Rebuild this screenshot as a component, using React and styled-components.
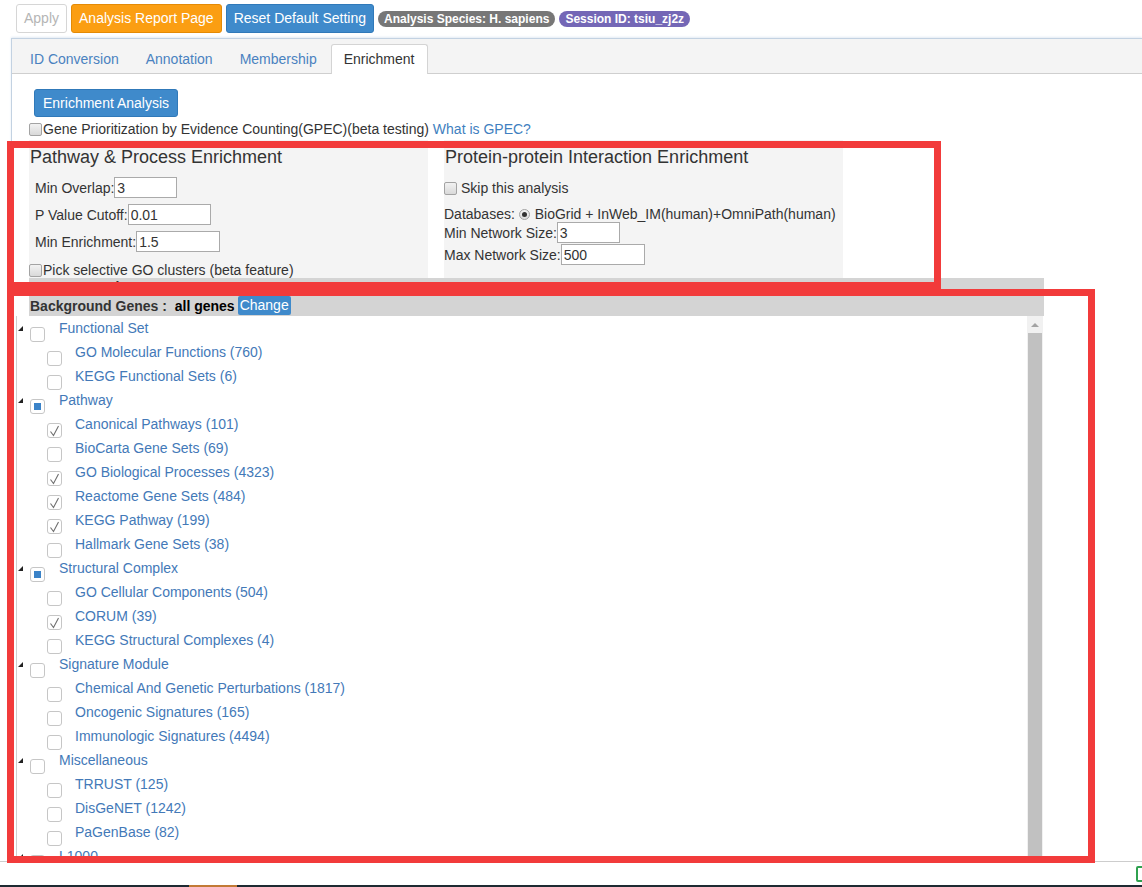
import React from "react";
import styled, { createGlobalStyle, css } from "styled-components";

const GlobalStyle = createGlobalStyle`
  html, body {
    margin: 0;
    padding: 0;
    background: #fff;
  }
  body {
    font-family: "Liberation Sans", Arial, sans-serif;
    font-size: 14px;
    color: #333;
  }
`;

const groups = [
    {
        name: "Functional Set",
        state: "none",
        items: [
            ["GO Molecular Functions (760)", false],
            ["KEGG Functional Sets (6)", false],
        ],
    },
    {
        name: "Pathway",
        state: "partial",
        items: [
            ["Canonical Pathways (101)", true],
            ["BioCarta Gene Sets (69)", false],
            ["GO Biological Processes (4323)", true],
            ["Reactome Gene Sets (484)", true],
            ["KEGG Pathway (199)", true],
            ["Hallmark Gene Sets (38)", false],
        ],
    },
    {
        name: "Structural Complex",
        state: "partial",
        items: [
            ["GO Cellular Components (504)", false],
            ["CORUM (39)", true],
            ["KEGG Structural Complexes (4)", false],
        ],
    },
    {
        name: "Signature Module",
        state: "none",
        items: [
            ["Chemical And Genetic Perturbations (1817)", false],
            ["Oncogenic Signatures (165)", false],
            ["Immunologic Signatures (4494)", false],
        ],
    },
    {
        name: "Miscellaneous",
        state: "none",
        items: [
            ["TRRUST (125)", false],
            ["DisGeNET (1242)", false],
            ["PaGenBase (82)", false],
        ],
    },
    { name: "L1000", state: "none", items: [] },
];

function TreeCheck({ state }) {
    return (
        <TreeBox>
            {state === "partial" && <PartialMark />}
            {state === "checked" && (
                <svg width="15" height="15" viewBox="0 0 15 15">
                    <polyline
                        points="3.5,8.5 6.5,12.5 11.5,3"
                        fill="none"
                        stroke="#6f6f6f"
                        strokeWidth="1.1"
                    />
                </svg>
            )}
        </TreeBox>
    );
}

export default function App() {
    return (
        <Page>
            <GlobalStyle />
            <Toolbar>
                <Btn $variant="disabled">Apply</Btn>
                <Btn $variant="warning">Analysis Report Page</Btn>
                <Btn $variant="primary">Reset Default Setting</Btn>
                <Badge $tone="#777">Analysis Species: H. sapiens</Badge>
                <Badge $tone="#7467b6">Session ID: tsiu_zj2z</Badge>
            </Toolbar>

            <Panel>
                <TabBar>
                    <Tab>ID Conversion</Tab>
                    <Tab>Annotation</Tab>
                    <Tab>Membership</Tab>
                    <Tab $active>Enrichment</Tab>
                </TabBar>
                <Body>
                    <ActionBtn>Enrichment Analysis</ActionBtn>
                    <CheckLine>
                        <NativeBox />
                        Gene Prioritization by Evidence Counting(GPEC)(beta
                        testing)&nbsp;<Link>What is GPEC?</Link>
                    </CheckLine>

                    <Wells>
                        <Well>
                            <WellTitle>Pathway &amp; Process Enrichment</WellTitle>
                            <Field $mt={10}>
                                Min Overlap:<Input $w={63} defaultValue="3" />
                            </Field>
                            <Field $mt={6}>
                                P Value Cutoff:
                                <Input $w={83} defaultValue="0.01" />
                            </Field>
                            <Field $mt={6}>
                                Min Enrichment:
                                <Input $w={84} defaultValue="1.5" />
                            </Field>
                            <PickLine>
                                <NativeBox />
                                Pick selective GO clusters (beta feature)
                            </PickLine>
                        </Well>
                        <Well>
                            <WellTitle>
                                Protein-protein Interaction Enrichment
                            </WellTitle>
                            <SkipLine>
                                <NativeBox $gap={4} />
                                Skip this analysis
                            </SkipLine>
                            <DbLine>
                                Databases:&nbsp;
                                <Radio />
                                BioGrid + InWeb_IM(human)+OmniPath(human)
                            </DbLine>
                            <NetField>
                                Min Network Size:
                                <Input $w={63} defaultValue="3" />
                            </NetField>
                            <NetField $mt={1}>
                                Max Network Size:
                                <Input $w={84} defaultValue="500" />
                            </NetField>
                        </Well>
                    </Wells>

                    <GrayBar $h={17}>Input Gene List 0</GrayBar>
                    <GrayBar $h={21}>
                        Background Genes :&nbsp;&nbsp;<Strong>all genes</Strong>
                        <ChangeBtn>Change</ChangeBtn>
                    </GrayBar>

                    <Tree>
                        <TreeList>
                            {groups.map((g) => (
                                <React.Fragment key={g.name}>
                                    <GroupRow>
                                        <Toggle />
                                        <TreeCheck state={g.state} />
                                        <GroupLabel>{g.name}</GroupLabel>
                                    </GroupRow>
                                    {g.items.map(([label, on]) => (
                                        <ItemRow key={label}>
                                            <TreeCheck
                                                state={on ? "checked" : "none"}
                                            />
                                            <ItemLabel>{label}</ItemLabel>
                                        </ItemRow>
                                    ))}
                                </React.Fragment>
                            ))}
                        </TreeList>
                        <ScrollBar>
                            <ScrollArrow />
                            <ScrollThumb />
                        </ScrollBar>
                    </Tree>
                </Body>
            </Panel>

            <Rule />
            <Bottom>
                <StatusIcon />
            </Bottom>
            <Taskbar>
                <TaskItem />
            </Taskbar>

            <Highlight $x={7} $y={141} $w={934} $h={148} />
            <Highlight $x={7} $y={289} $w={1088} $h={574} />
        </Page>
    );
}

const Page = styled.div`
    position: relative;
    width: 1142px;
    height: 887px;
    overflow: hidden;
    display: flex;
    flex-direction: column;
`;

const Toolbar = styled.div`
    display: flex;
    align-items: center;
    gap: 4px;
    padding: 4px 0 0 16px;
    height: 33px;
    box-sizing: border-box;
`;

const variants = {
    disabled: css`
        background: #fff;
        border-color: #d6d6d6;
        color: #b5b5b5;
    `,
    warning: css`
        background: #fb9e12;
        border-color: #e48a05;
        color: #fff;
    `,
    primary: css`
        background: #3f8acb;
        border-color: #3079b9;
        color: #fff;
    `,
};

const Btn = styled.button`
    font-family: "Liberation Sans", Arial, sans-serif;
    font-size: 14px;
    line-height: 17px;
    padding: 5px 7px;
    border: 1px solid;
    border-radius: 3px;
    ${(p) => variants[p.$variant]}
`;

const Badge = styled.span`
    background: ${(p) => p.$tone};
    color: #fff;
    font-weight: bold;
    font-size: 12px;
    line-height: 14px;
    padding: 1px 6px;
    border-radius: 9px;
    margin-top: 1px;
`;

const Panel = styled.div`
    margin: 5px 0 0 11px;
    border-top: 1px solid #c3d2e2;
    border-left: 1px solid #c3d2e2;
    box-shadow: 0 -1px 2px #e3ebf4;
`;

const TabBar = styled.div`
    display: flex;
    align-items: flex-end;
    gap: 1px;
    height: 35px;
    box-sizing: border-box;
    padding-left: 5px;
    background: #f4f4f4;
    border-bottom: 1px solid #cfcfcf;
`;

const Tab = styled.div`
    height: 30px;
    line-height: 29px;
    padding: 0 12px;
    margin-bottom: -1px;
    box-sizing: border-box;
    color: ${(p) => (p.$active ? "#333" : "#4a82c0")};
    background: ${(p) => (p.$active ? "#fff" : "transparent")};
    border: 1px solid ${(p) => (p.$active ? "#d4d4d4" : "transparent")};
    border-bottom: none;
    border-radius: 3px 3px 0 0;
`;

const Body = styled.div`
    padding: 15px 0 0 17px;
`;

const ActionBtn = styled.button`
    display: block;
    margin-left: 5px;
    height: 28px;
    padding: 0 8px;
    font-family: "Liberation Sans", Arial, sans-serif;
    font-size: 14px;
    color: #fff;
    background: #3f8acb;
    border: 1px solid #3079b9;
    border-radius: 3px;
`;

const CheckLine = styled.div`
    display: flex;
    align-items: center;
    margin-top: 3px;
    line-height: 18px;
`;

const Link = styled.span`
    color: #3f7fc0;
`;

const NativeBox = styled.span`
    display: inline-block;
    width: 13px;
    height: 13px;
    box-sizing: border-box;
    margin-right: ${(p) => (p.$gap == null ? 1 : p.$gap)}px;
    border: 1px solid #a3a3a3;
    border-radius: 2px;
    background: linear-gradient(#f2f2f2, #d9d9d9);
    flex: none;
`;

const Radio = styled.span`
    position: relative;
    display: inline-block;
    width: 11px;
    height: 11px;
    box-sizing: border-box;
    margin: 0 5px 0 0;
    border: 1px solid #a3a3a3;
    border-radius: 50%;
    background: linear-gradient(#f4f4f4, #dcdcdc);
    &::after {
        content: "";
        position: absolute;
        left: 2px;
        top: 2px;
        width: 5px;
        height: 5px;
        border-radius: 50%;
        background: #333;
    }
`;

const Wells = styled.div`
    display: flex;
    gap: 16px;
    margin-top: 2px;
`;

const Well = styled.div`
    width: 399px;
    height: 138px;
    background: #f4f4f4;
    display: flex;
    flex-direction: column;
`;

const WellTitle = styled.div`
    margin-top: 7px;
    padding-left: 1px;
    font-size: 18px;
    line-height: 20px;
    color: #333;
`;

const Field = styled.div`
    display: flex;
    align-items: center;
    margin-top: ${(p) => p.$mt}px;
    padding-left: 6px;
`;

const NetField = styled.div`
    display: flex;
    align-items: center;
    margin-top: ${(p) => p.$mt || 0}px;
`;

const Input = styled.input`
    width: ${(p) => p.$w}px;
    height: 21px;
    box-sizing: border-box;
    padding: 0 2px;
    border: 1px solid #aaa;
    font-family: "Liberation Sans", Arial, sans-serif;
    font-size: 14px;
    color: #333;
    background: #fff;
    outline: none;
`;

const PickLine = styled.div`
    display: flex;
    align-items: center;
    margin-top: 10px;
    line-height: 16px;
`;

const SkipLine = styled.div`
    display: flex;
    align-items: center;
    margin-top: 12px;
    line-height: 18px;
`;

const DbLine = styled.div`
    display: flex;
    align-items: center;
    margin-top: 9px;
    line-height: 16px;
`;

const GrayBar = styled.div`
    display: flex;
    align-items: center;
    width: 1015px;
    height: ${(p) => p.$h}px;
    padding-left: 1px;
    box-sizing: border-box;
    background: #d4d4d4;
    font-weight: bold;
    color: #333;
`;

const Strong = styled.span`
    color: #000;
`;

const ChangeBtn = styled.span`
    margin-left: 3px;
    height: 19px;
    line-height: 19px;
    padding: 0 2px;
    font-weight: normal;
    color: #fff;
    background: #3f8acb;
    border-radius: 2px;
`;

const Tree = styled.div`
    display: flex;
    margin-left: -13px;
    width: 1028px;
    height: 545px;
    box-sizing: border-box;
    border-left: 1px solid #cfcfcf;
    overflow: hidden;
`;

const TreeList = styled.div`
    flex: 1;
`;

const GroupRow = styled.div`
    display: flex;
    align-items: flex-start;
    height: 24px;
`;

const ItemRow = styled.div`
    display: flex;
    align-items: flex-start;
    height: 24px;
    padding-left: 30px;
`;

const Toggle = styled.span`
    width: 0;
    height: 0;
    margin: 10px 7px 0 1px;
    border-left: 5px solid transparent;
    border-bottom: 5px solid #222;
`;

const TreeBox = styled.span`
    position: relative;
    display: flex;
    align-items: center;
    justify-content: center;
    flex: none;
    width: 15px;
    height: 15px;
    box-sizing: border-box;
    margin-top: 11px;
    border: 1px solid #c6c6c6;
    border-radius: 3px;
    background: #fff;
    svg {
        position: absolute;
        left: -1px;
        top: -1px;
    }
`;

const PartialMark = styled.span`
    width: 7px;
    height: 7px;
    background: #3b83c8;
`;

const GroupLabel = styled.span`
    margin-left: 14px;
    line-height: 24px;
    color: #4379b8;
`;

const ItemLabel = styled.span`
    margin-left: 13px;
    line-height: 24px;
    color: #4379b8;
`;

const ScrollBar = styled.div`
    display: flex;
    flex-direction: column;
    width: 16px;
    margin-right: 1px;
    padding-top: 1px;
    background: #f1f1f1;
`;

const ScrollArrow = styled.div`
    height: 16px;
    display: flex;
    align-items: center;
    justify-content: center;
    &::after {
        content: "";
        border-left: 4px solid transparent;
        border-right: 4px solid transparent;
        border-bottom: 4px solid #a3a3a3;
    }
`;

const ScrollThumb = styled.div`
    flex: 1;
    margin: 0 1px;
    background: #c1c1c1;
`;

const Rule = styled.div`
    height: 1px;
    background: #cdcdcd;
`;

const Bottom = styled.div`
    display: flex;
    justify-content: flex-end;
    height: 23px;
`;

const StatusIcon = styled.span`
    width: 12px;
    height: 16px;
    margin: 4px -6px 0 0;
    box-sizing: border-box;
    border: 2px solid #2fa14f;
    border-radius: 2px;
`;

const Taskbar = styled.div`
    display: flex;
    height: 2px;
    background: #1e2a32;
`;

const TaskItem = styled.span`
    margin-left: 189px;
    width: 48px;
    background: #c27a35;
`;

const Highlight = styled.div`
    position: absolute;
    left: ${(p) => p.$x}px;
    top: ${(p) => p.$y}px;
    width: ${(p) => p.$w}px;
    height: ${(p) => p.$h}px;
    box-sizing: border-box;
    border: 7px solid #f23b3b;
    pointer-events: none;
`;
